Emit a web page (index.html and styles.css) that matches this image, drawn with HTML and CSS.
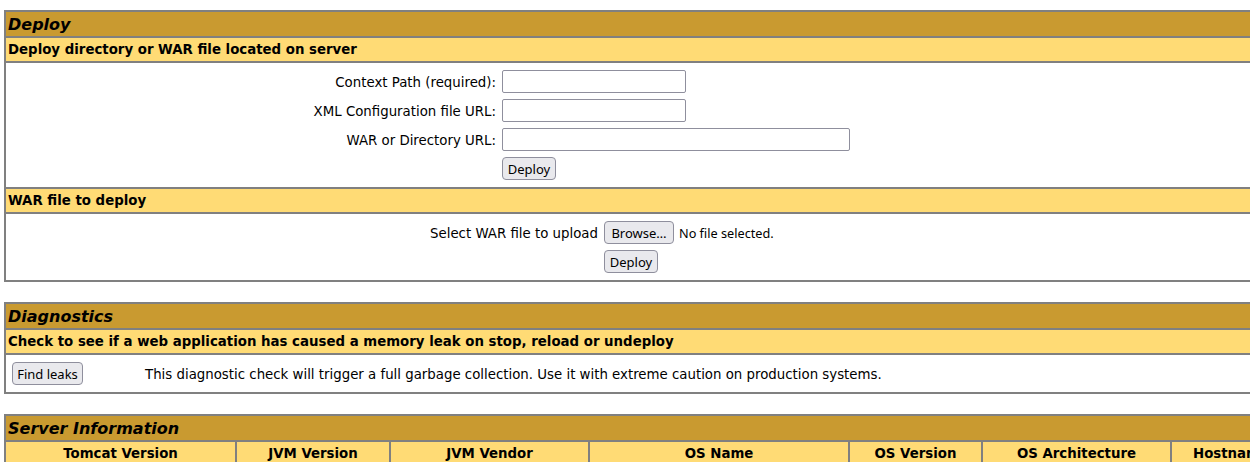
FILE: index.html
```
<!DOCTYPE html>
<html>
<head>
<meta charset="utf-8">
<title>Tomcat Manager</title>
<link rel="stylesheet" href="styles.css">
</head>
<body>
<div class="page">

<table class="box">
  <tr><td class="title">Deploy</td></tr>
  <tr><td class="header-left"><small>Deploy directory or WAR file located on server</small></td></tr>
  <tr><td class="content">
    <table class="inner">
      <tr><td class="row-right lab-deploy"><small>Context Path (required):</small></td><td class="row-left"><input class="txt short" type="text"></td></tr>
      <tr><td class="row-right lab-deploy"><small>XML Configuration file URL:</small></td><td class="row-left"><input class="txt short" type="text"></td></tr>
      <tr><td class="row-right lab-deploy"><small>WAR or Directory URL:</small></td><td class="row-left"><input class="txt long" type="text"></td></tr>
      <tr><td class="row-right lab-deploy">&nbsp;</td><td class="row-left"><button class="btn btn-deploy">Deploy</button></td></tr>
    </table>
  </td></tr>
  <tr><td class="header-left"><small>WAR file to deploy</small></td></tr>
  <tr><td class="content">
    <table class="inner">
      <tr><td class="row-right lab-war"><small>Select WAR file to upload</small></td><td class="row-left"><span class="file"><button class="btn btn-browse">Browse…</button><span class="nofile">No file selected.</span></span></td></tr>
      <tr><td class="row-right lab-war">&nbsp;</td><td class="row-left"><button class="btn btn-deploy">Deploy</button></td></tr>
    </table>
  </td></tr>
</table>

<table class="box">
  <tr><td class="title">Diagnostics</td></tr>
  <tr><td class="header-left"><small>Check to see if a web application has caused a memory leak on stop, reload or undeploy</small></td></tr>
  <tr><td class="content">
    <table class="inner">
      <tr><td class="row-left lab-diag"><button class="btn btn-leaks">Find leaks</button></td><td class="row-left"><small>This diagnostic check will trigger a full garbage collection. Use it with extreme caution on production systems.</small></td></tr>
    </table>
  </td></tr>
</table>

<table class="box fixed">
  <colgroup>
    <col class="c1"><col class="c2"><col class="c3"><col class="c4"><col class="c5"><col class="c6"><col class="c7">
  </colgroup>
  <tr><td class="title" colspan="7">Server Information</td></tr>
  <tr>
    <th><small>Tomcat Version</small></th>
    <th><small>JVM Version</small></th>
    <th><small>JVM Vendor</small></th>
    <th><small>OS Name</small></th>
    <th><small>OS Version</small></th>
    <th><small>OS Architecture</small></th>
    <th><small>Hostname</small></th>
  </tr>
</table>

</div>
</body>
</html>
```
FILE: styles.css
```
html, body {
  margin: 0;
  padding: 0;
  overflow: hidden;
  background: #fff;
}
.page {
  width: 1288px;
  padding: 10px 0 0 4px;
  font-family: "DejaVu Sans", sans-serif;
  font-size: 16px;
  color: #000;
}
small { font-size: 13.333px; }
.box {
  width: 100%;
  border-collapse: separate;
  border-spacing: 0;
  border: 1px solid #808080;
  margin-bottom: 20px;
}
.box > tbody > tr > td,
.box > tbody > tr > th {
  border: 1px solid #808080;
  padding: 3px;
}
.box > tbody > tr > td.title {
  text-align: left;
  vertical-align: top;
  font-style: italic;
  font-weight: bold;
  line-height: 18px;
  padding: 4px 3px 2px 2px;
  background: #c99a30;
}
.box > tbody > tr > td.header-left {
  text-align: left;
  vertical-align: top;
  font-weight: bold;
  line-height: 16px;
  padding-left: 2px;
  background: #ffdb75;
}
.box > tbody > tr > td.content {
  padding: 4px 3px;
}
.box > tbody > tr > th {
  text-align: center;
  vertical-align: top;
  font-weight: bold;
  line-height: 16px;
  background: #ffdb75;
  white-space: nowrap;
  overflow: hidden;
}
.inner {
  border-collapse: separate;
  border-spacing: 0;
}
.inner td { padding: 3px; }
.row-right { text-align: right; vertical-align: middle; }
.row-left { text-align: left; vertical-align: middle; }
.lab-deploy { width: 484px; }
.lab-war { width: 586px; }
.lab-diag { width: 127px; }
.txt {
  box-sizing: border-box;
  height: 23px;
  border: 1px solid #8f8f9d;
  border-radius: 2px;
  background: #fff;
  margin: 0;
  padding: 0 4px;
  display: block;
}
.short { width: 184px; }
.long { width: 348px; }
.btn {
  box-sizing: border-box;
  height: 23px;
  margin: 0;
  padding: 0;
  font-family: "Noto Sans", sans-serif;
  font-size: 13px;
  color: #000;
  background: #e9e9ed;
  border: 1px solid #8f8f9d;
  border-radius: 4px;
  text-align: center;
  vertical-align: middle;
}
.btn-deploy { width: 54px; }
.btn-browse { width: 70px; }
.btn-leaks { width: 71px; }
.file {
  display: inline-flex;
  align-items: center;
  gap: 5px;
}
.nofile {
  font-family: "Noto Sans", sans-serif;
  font-size: 12.7px;
}
.fixed { table-layout: fixed; }
.c1 { width: 231px; }
.c2 { width: 154px; }
.c3 { width: 199px; }
.c4 { width: 260px; }
.c5 { width: 133px; }
.c6 { width: 189px; }
.c7 { width: 120px; }
```
